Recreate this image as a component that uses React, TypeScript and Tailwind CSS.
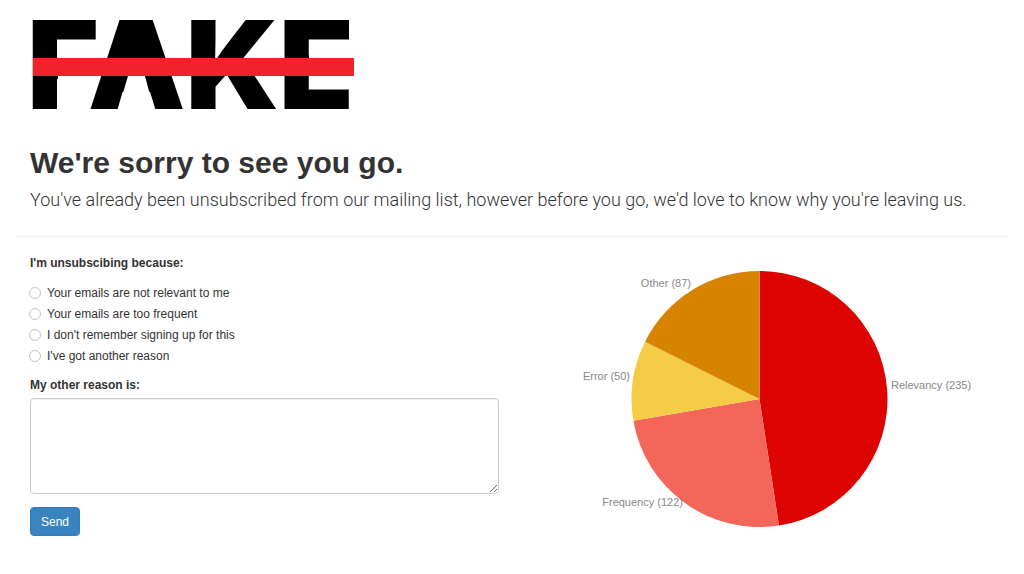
const reasons = [
  { id: 'relevancy', label: 'Your emails are not relevant to me' },
  { id: 'frequency', label: 'Your emails are too frequent' },
  { id: 'signup', label: "I don't remember signing up for this" },
  { id: 'other', label: "I've got another reason" },
];

type Slice = {
  name: string;
  value: number;
  color: string;
  x: number;
  y: number;
  anchor: 'start' | 'end';
};

const slices: Slice[] = [
  { name: 'Relevancy', value: 235, color: '#dc0300', x: 366, y: 118, anchor: 'start' },
  { name: 'Frequency', value: 122, color: '#f3675a', x: 158, y: 235, anchor: 'end' },
  { name: 'Error', value: 50, color: '#f5cc45', x: 105, y: 109, anchor: 'end' },
  { name: 'Other', value: 87, color: '#d68400', x: 166, y: 16, anchor: 'end' },
];

const CX = 234.5;
const CY = 128;
const R = 128;

function point(fraction: number) {
  const angle = fraction * 2 * Math.PI;
  return `${(CX + R * Math.sin(angle)).toFixed(2)} ${(CY - R * Math.cos(angle)).toFixed(2)}`;
}

function Logo() {
  return (
    <svg
      role="img"
      aria-label="Fake"
      viewBox="0 0 324 92"
      className="block h-[92px] w-[324px] max-w-full overflow-visible"
    >
      <text x="-3" y="90" fontFamily="Inter, sans-serif" fontWeight="900" fontSize="123" fill="#000">
        FAKE
      </text>
      {/* Solid peak and open base behind the strike bar */}
      <path d="M102 12h8l4 30h-18z" fill="#000" />
      <path d="M88 91L98 57H115L124 91z" fill="#fff" />
      <path d="M28 57h38v6h-38zM279 32h40v7h-40z" fill="#fff" />
      <rect x="3" y="39" width="321" height="18" fill="#f0222a" />
    </svg>
  );
}

function ReasonsChart() {
  const total = slices.reduce((sum, s) => sum + s.value, 0);
  let start = 0;
  const paths = slices.map((s) => {
    const end = start + s.value;
    const large = s.value / total > 0.5 ? 1 : 0;
    const d = `M${CX} ${CY} L${point(start / total)} A${R} ${R} 0 ${large} 1 ${point(end / total)} Z`;
    start = end;
    return <path key={s.name} d={d} fill={s.color} />;
  });
  return (
    <svg
      role="img"
      aria-label="Reasons for unsubscribing"
      viewBox="0 0 469 256"
      className="block h-64 w-full overflow-visible"
    >
      {paths}
      {slices.map((s) => (
        <text key={s.name} x={s.x} y={s.y} textAnchor={s.anchor} fontSize="11" fill="#888888">
          {s.name} ({s.value})
        </text>
      ))}
    </svg>
  );
}

export default function App() {
  return (
    <main className="bg-white px-[17px] pt-[19px] pb-9 font-['Liberation_Sans',Arial,sans-serif] text-xs text-[#333333]">
      <header className="border-b border-[#eeeeee] px-[13px] pb-[22px]">
        <Logo />
        <h1 className="mt-8 text-[30px] leading-10 font-bold">We're sorry to see you go.</h1>
        <p className="mt-[3px] font-[Roboto,sans-serif] text-lg leading-7 font-light">
          You've already been unsubscribed from our mailing list, however before you go, we'd love to
          know why you're leaving us.
        </p>
      </header>

      <div className="grid sm:grid-cols-2">
        <form className="px-[13px] pt-[17px]" onSubmit={(e) => e.preventDefault()}>
          <fieldset>
            <legend className="font-bold leading-[18px]">I'm unsubscibing because:</legend>
            <div className="mt-[10px]">
              {reasons.map((r) => (
                <div key={r.id} className="flex h-[21px] items-center gap-[6px]">
                  <input
                    type="radio"
                    id={r.id}
                    name="reason"
                    value={r.id}
                    className="-ml-px size-3 appearance-none rounded-full border border-[#c4c4c4] bg-white checked:border-4 checked:border-[#3984c0]"
                  />
                  <label htmlFor={r.id}>{r.label}</label>
                </div>
              ))}
            </div>
          </fieldset>
          <label htmlFor="details" className="mt-[10px] block font-bold leading-[18px]">
            My other reason is:
          </label>
          <textarea
            id="details"
            className="mt-1 block h-24 w-full resize-y rounded border border-[#cccccc] bg-white px-3 py-2 shadow-[inset_0_1px_1px_rgba(0,0,0,0.05)]"
          />
          <button
            type="submit"
            className="mt-[13px] h-[29px] rounded border border-[#357ebd] bg-[#3984c0] px-[10px] text-white"
          >
            Send
          </button>
        </form>
        <section className="px-[13px] pt-[34px]">
          <ReasonsChart />
        </section>
      </div>
    </main>
  );
}
